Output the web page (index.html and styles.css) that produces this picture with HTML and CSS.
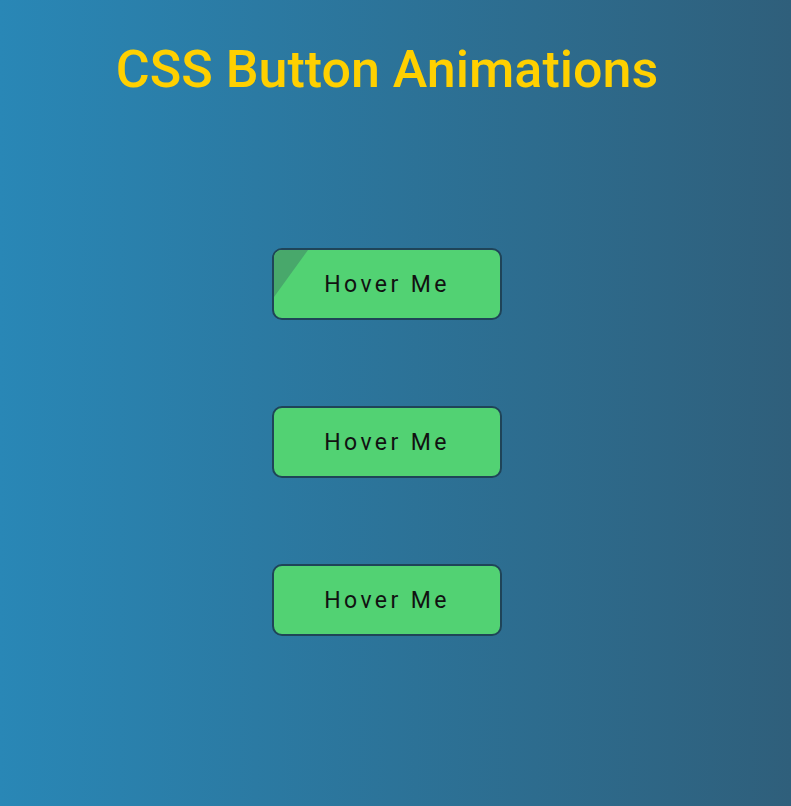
FILE: index.html
```html
<!DOCTYPE html>
<html lang="en">
<head>
<meta charset="utf-8">
<title>CSS Button Animations</title>
<link rel="stylesheet" href="styles.css">
</head>
<body>
  <main class="page">
    <h1 class="title">CSS Button Animations</h1>
    <div class="buttons">
      <button class="btn btn-corner">Hover Me</button>
      <button class="btn">Hover Me</button>
      <button class="btn">Hover Me</button>
    </div>
  </main>
</body>
</html>
```

FILE: styles.css
```css
html, body {
  margin: 0;
  padding: 0;
  height: 100%;
}

body {
  background: linear-gradient(to right, #2987b6, #2f5f7b);
  font-family: Roboto, "Liberation Sans", sans-serif;
}

.page {
  width: 774px;
  min-height: 806px;
  display: flex;
  flex-direction: column;
  align-items: center;
}

.title {
  margin: 38px 0 0;
  font-size: 52px;
  font-weight: 500;
  line-height: 64px;
  color: #ffd000;
}

.buttons {
  margin-top: 146px;
  display: flex;
  flex-direction: column;
  align-items: center;
  gap: 86px;
}

.btn {
  position: relative;
  overflow: hidden;
  width: 230px;
  height: 72px;
  box-sizing: border-box;
  border: 2px solid #1f4458;
  border-radius: 10px;
  background: #52d273;
  color: #111;
  font-family: Roboto, "Liberation Sans", sans-serif;
  font-size: 23px;
  letter-spacing: 3.4px;
  padding: 0;
  cursor: pointer;
}

.btn-corner::before {
  content: "";
  position: absolute;
  left: 0;
  top: 0;
  width: 34px;
  height: 47px;
  background: #48a86b;
  clip-path: polygon(0 0, 100% 0, 0 100%);
}
```
